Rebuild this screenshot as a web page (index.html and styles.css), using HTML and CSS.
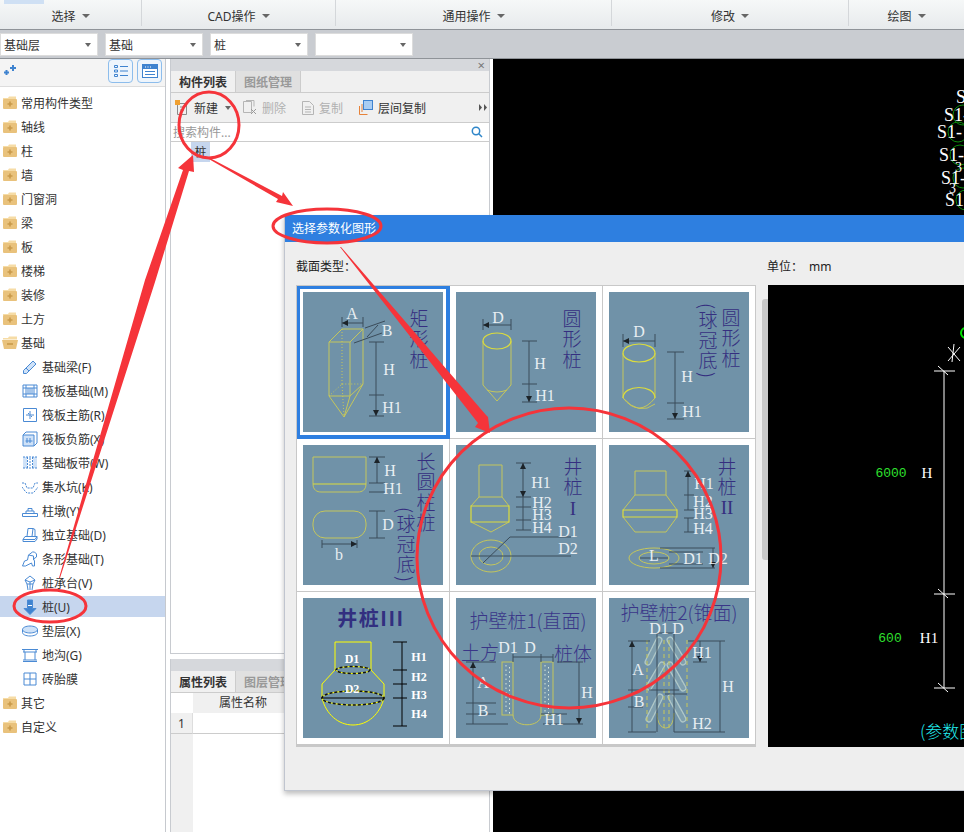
FILE: index.html
```html
<!DOCTYPE html>
<html lang="zh-CN">
<head>
    <meta charset="UTF-8">
    <meta name="viewport" content="width=device-width, initial-scale=1.0">
    <title>选择参数化图形</title>
    <link rel="stylesheet" href="styles.css">
</head>
<body>
<svg class="defs" width="0" height="0">
    <defs>
        <marker id="ah" viewBox="0 0 6 6" refX="6" refY="3" markerWidth="6" markerHeight="6" markerUnits="userSpaceOnUse" orient="auto-start-reverse">
            <path d="M0 0L6 3L0 6Z" fill="#1c2328"/>
        </marker>
        <symbol id="folder-plus" viewBox="0 0 16 14">
            <path d="M1 2h5l1-1.500h7v3H1z" fill="#f6dca6"/>
            <rect x="1" y="3" width="14" height="10" rx="1" fill="#e9c27c"/>
            <path d="M8 5.500v5M5.500 8h5" stroke="#c99a4a" stroke-width="1.600"/>
        </symbol>
        <symbol id="folder-minus" viewBox="0 0 16 14">
            <path d="M1 2h5l1-1.500h8v3H1z" fill="#f6dca6"/>
            <path d="M0 4h16l-2 9H2z" fill="#e9c27c"/>
            <path d="M5 8h6" stroke="#c99a4a" stroke-width="1.600"/>
        </symbol>
    </defs>
</svg>

<div class="app">
    <div class="ribbon">
        <span class="ribbon-chip"></span>
        <div class="ribbon-col col-select">选择<i class="caret"></i></div>
        <div class="ribbon-col col-cad">CAD操作<i class="caret"></i></div>
        <div class="ribbon-col col-common">通用操作<i class="caret"></i></div>
        <div class="ribbon-col col-edit">修改<i class="caret"></i></div>
        <div class="ribbon-col col-draw">绘图<i class="caret"></i></div>
    </div>

    <div class="selects">
        <div class="select">基础层<i class="caret small"></i></div>
        <div class="select">基础<i class="caret small"></i></div>
        <div class="select">桩<i class="caret small"></i></div>
        <div class="select"><i class="caret small"></i></div>
    </div>

    <div class="workspace">
        <div class="nav">
            <div class="nav-tools">
                <svg class="nav-add" width="14" height="12" viewBox="0 0 14 12"><path d="M10 0v6M7 3h6M3.500 5v5M1 7.500h5" stroke="#3f83cf" stroke-width="2"/></svg>
                <span class="nav-btn">
                    <svg width="14" height="14" viewBox="0 0 14 14" fill="none" stroke="#3f83cf"><path d="M.5 1.500h3v2h-3zM.5 6h3v2h-3zM.5 10.500h3v2h-3zM6 2.500h8M6 7h8M6 11.500h8"/></svg>
                </span>
                <span class="nav-btn">
                    <svg width="16" height="14" viewBox="0 0 16 14"><rect x=".5" y=".5" width="15" height="13" fill="#fff" stroke="#3f83cf"/><rect x="1" y="1" width="14" height="4" fill="#3f83cf"/><path d="M3 7.500h10M3 10.500h10" stroke="#3f83cf"/><path d="M3 3h1M5.500 3h1M8 3h1" stroke="#fff"/></svg>
                </span>
            </div>
            <ul class="tree">
                <li class="tree-row"><svg class="folder" width="16" height="14"><use href="#folder-plus"/></svg>常用构件类型</li>
                <li class="tree-row"><svg class="folder" width="16" height="14"><use href="#folder-plus"/></svg>轴线</li>
                <li class="tree-row"><svg class="folder" width="16" height="14"><use href="#folder-plus"/></svg>柱</li>
                <li class="tree-row"><svg class="folder" width="16" height="14"><use href="#folder-plus"/></svg>墙</li>
                <li class="tree-row"><svg class="folder" width="16" height="14"><use href="#folder-plus"/></svg>门窗洞</li>
                <li class="tree-row"><svg class="folder" width="16" height="14"><use href="#folder-plus"/></svg>梁</li>
                <li class="tree-row"><svg class="folder" width="16" height="14"><use href="#folder-plus"/></svg>板</li>
                <li class="tree-row"><svg class="folder" width="16" height="14"><use href="#folder-plus"/></svg>楼梯</li>
                <li class="tree-row"><svg class="folder" width="16" height="14"><use href="#folder-plus"/></svg>装修</li>
                <li class="tree-row"><svg class="folder" width="16" height="14"><use href="#folder-plus"/></svg>土方</li>
                <li class="tree-row"><svg class="folder" width="16" height="14"><use href="#folder-minus"/></svg>基础</li>
                <li class="tree-row leaf">
                    <svg class="leaf-icon" viewBox="0 0 16 16"><path class="fill" d="M1.500 11.500L11 2l3 3-9.500 9.500h-3z"/><path d="M1.500 11.500L11 2l3 3-9.500 9.500h-3zM4 9l3 3"/></svg>基础梁(F)
                </li>
                <li class="tree-row leaf">
                    <svg class="leaf-icon" viewBox="0 0 16 16"><path d="M1 2h14v12H1zM4 2v12M12 2v12M1 5h14M1 11h14M6 5v6M8 5v6M10 5v6" /></svg>筏板基础(M)
                </li>
                <li class="tree-row leaf">
                    <svg class="leaf-icon" viewBox="0 0 16 16"><path d="M1.500 1.500h13v13h-13zM8 4v8M4 8h8M6 6.500h1M9 9.500h1"/></svg>筏板主筋(R)
                </li>
                <li class="tree-row leaf">
                    <svg class="leaf-icon" viewBox="0 0 16 16"><path class="fill" d="M1 4h11v11H1z"/><path d="M1 4h11v11H1zM1 4l3-3h11v11l-3 3M5 7v5M8 7v5M3.500 10h7"/></svg>筏板负筋(X)
                </li>
                <li class="tree-row leaf">
                    <svg class="leaf-icon" viewBox="0 0 16 16"><path class="fill" d="M1 2h4v11H1zM11 2h4v11h-4z"/><path d="M1 2h14M1 13h14M5.500 2v11M10.500 2v11M8 3v9" stroke-dasharray="2 1"/></svg>基础板带(W)
                </li>
                <li class="tree-row leaf">
                    <svg class="leaf-icon" viewBox="0 0 16 16"><path d="M0 4h3l2 5h6l2-5h3M0 8l3 4 2 2h6l2-2 3-4" stroke-dasharray="2 1"/></svg>集水坑(K)
                </li>
                <li class="tree-row leaf">
                    <svg class="leaf-icon" viewBox="0 0 16 16"><path d="M.5 13.500h15v-3H.5zM4 10.500V8h8v2.500M6 8V5.500h4V8"/></svg>柱墩(Y)
                </li>
                <li class="tree-row leaf">
                    <svg class="leaf-icon" viewBox="0 0 16 16"><path d="M1 14.500h12l2-2.500V9.500H3l-2 3zM1 12.500h12l2-3M5 9.500l1-8h5l-1 8M11 1.500l2 1v7"/></svg>独立基础(D)
                </li>
                <li class="tree-row leaf">
                    <svg class="leaf-icon" viewBox="0 0 16 16"><path d="M.5 15l2-5 3-1 1-5 4-3h2l2 2v3l-3 2 1 2v5h-2l-1-3-6 3zM6.500 4l5 1M11.500 5v4"/></svg>条形基础(T)
                </li>
                <li class="tree-row leaf">
                    <svg class="leaf-icon" viewBox="0 0 16 16"><path d="M8 1l5 4-2 4H5L3 5zM3 5l5 2 5-2M8 7v2M5 9l1 6M11 9l-1 6M8 9v6"/></svg>桩承台(V)
                </li>
                <li class="tree-row leaf active">
                    <svg class="leaf-icon solid" viewBox="0 0 16 16"><path d="M5.500 1h5v8.500H14l-6 6-6-6h3.500z"/><path class="cut" d="M6 6.500h4"/></svg>桩(U)
                </li>
                <li class="tree-row leaf">
                    <svg class="leaf-icon wide" viewBox="0 0 16 12"><ellipse class="fill" cx="8" cy="4.500" rx="7.500" ry="3.500"/><path d="M.5 4.500v3c0 2 3.500 3.500 7.500 3.500s7.500-1.500 7.500-3.500v-3M.5 4.500c0-2 3.500-3.500 7.500-3.500s7.500 1.500 7.500 3.500-3.500 3.500-7.500 3.500-7.500-1.500-7.500-3.500z"/></svg>垫层(X)
                </li>
                <li class="tree-row leaf">
                    <svg class="leaf-icon" viewBox="0 0 16 16"><path d="M0 2.500h16M1 5h14M2 2.500v2.500M14 2.500v2.500M3 5v8M13 5v8M1 14.500h14M1 13h14"/></svg>地沟(G)
                </li>
                <li class="tree-row leaf">
                    <svg class="leaf-icon" viewBox="0 0 16 16"><path d="M2 2h12v12H2zM8 2v12M2 8h12"/></svg>砖胎膜
                </li>
                <li class="tree-row"><svg class="folder" width="16" height="14"><use href="#folder-plus"/></svg>其它</li>
                <li class="tree-row"><svg class="folder" width="16" height="14"><use href="#folder-plus"/></svg>自定义</li>
            </ul>
        </div>

        <div class="side">
            <div class="pane pane-list">
                <div class="pane-strip"><span class="pane-close">×</span></div>
                <div class="tabs">
                    <span class="tab on">构件列表</span>
                    <span class="tab">图纸管理</span>
                </div>
                <div class="list-tools">
                    <span class="tool tool-new">
                        <svg width="14" height="15" viewBox="0 0 14 15" fill="none"><path d="M2.500 3.500h9v11h-9zM5 7h4M5 10h4" stroke="#8a8a8a"/><rect x="0" y="0" width="5" height="5" fill="#f0a030"/></svg>
                        新建<i class="caret small"></i>
                    </span>
                    <span class="tool off">
                        <svg width="14" height="15" viewBox="0 0 14 15" fill="none" stroke="#b5b5b5"><path d="M.5 1.500h8v11h-8zM3 .5h8v6"/><path d="M8 9l5 5M13 9l-5 5" stroke="#9a9a9a"/></svg>
                        删除
                    </span>
                    <span class="tool off">
                        <svg width="12" height="15" viewBox="0 0 12 15" fill="none" stroke="#b5b5b5"><path d="M.5 1.500h7l4 4v9H.5zM3 7h6M3 9.500h6M3 12h6"/></svg>
                        复制
                    </span>
                    <span class="tool">
                        <svg width="14" height="15" viewBox="0 0 14 15" fill="none"><path d="M.5 6v8.500h8M3 4v8" stroke="#e6823a"/><rect x="4.500" y=".5" width="9" height="9" fill="#a9cdf3" stroke="#3f83cf"/></svg>
                        层间复制
                    </span>
                    <svg class="tools-more" width="8" height="7" viewBox="0 0 8 7"><path d="M0 0l3 3.500L0 7zM5 0l3 3.500L5 7z" fill="#555"/></svg>
                </div>
                <div class="search">
                    <span>搜索构件...</span>
                    <svg width="12" height="12" viewBox="0 0 12 12" fill="none" stroke="#2f86c9" stroke-width="1.500"><circle cx="5" cy="5" r="3.700"/><path d="M7.800 7.800L11 11"/></svg>
                </div>
                <div class="list-body"><span class="list-item">桩</span></div>
            </div>
            <div class="pane pane-props">
                <div class="pane-strip"></div>
                <div class="tabs">
                    <span class="tab on">属性列表</span>
                    <span class="tab">图层管理</span>
                </div>
                <div class="props">
                    <div class="props-nums"><span class="props-corner"></span><span class="props-num">1</span></div>
                    <div class="props-col"><div class="props-head">属性名称</div><div class="props-cell"></div></div>
                </div>
            </div>
        </div>

        <div class="canvas">
            <svg class="cad" width="471" height="156" viewBox="0 0 471 156">
                <g class="cad-rings">
                    <circle cx="470" cy="56" r="10"/>
                    <circle cx="465" cy="73" r="10"/>
                    <circle cx="467" cy="96" r="10"/>
                    <circle cx="470" cy="119" r="10"/>
                    <circle cx="473" cy="141" r="10"/>
                </g>
                <g class="cad-labels">
                    <text x="463" y="44">S1</text>
                    <text x="451" y="62">S1-</text>
                    <text x="444" y="79">S1-</text>
                    <text x="446" y="102">S1-</text>
                    <text x="448" y="125">S1-</text>
                    <text x="452" y="147">S1-</text>
                    <text x="462" y="113" class="cad-small">3</text>
                    <text x="456" y="134" class="cad-small">3</text>
                </g>
            </svg>
        </div>
    </div>

    <!-- 选择参数化图形 window -->
    <div class="dialog">
        <div class="dialog-title">选择参数化图形</div>
        <div class="dialog-info">
            <span class="info-type">截面类型：</span>
            <span class="info-unit">单位：</span>
            <span class="info-mm">mm</span>
        </div>
        <div class="dialog-main">
            <div class="shapes">
                <div class="shape selected">
                    <svg class="thumb" viewBox="0 0 140 140">
                        <g class="yl">
                            <path d="M26 50h21v54H26zM26 50l13-13h21L47 50M60 37v55L47 104M26 104l15 21 19-33M47 104l-6 21"/>
                            <path class="dot" d="M39 37v55M26 104l13-12h21M39 92l2 33"/>
                        </g>
                        <g class="dm">
                            <path d="M39 25v10M60 25v10M62 36l20-7M51 51l28-10M66 50h15M66 103h15M66 124h15"/>
                        </g>
                        <g class="dm" marker-start="url(#ah)" marker-end="url(#ah)">
                            <path d="M39 31H60M64 45L75 33M73 50V103M73 103V124"/>
                        </g>
                        <g class="lb">
                            <text x="49" y="21">A</text><text x="84" y="38">B</text><text x="86" y="77">H</text><text x="89" y="115">H1</text>
                        </g>
                        <text class="vt" x="116" y="17">矩形桩</text>
                    </svg>
                </div>
                <div class="shape">
                    <svg class="thumb" viewBox="0 0 140 140">
                        <g class="yl">
                            <path d="M27 49v44l14 16 14-16V49"/>
                            <path d="M31 98q10 4 20 0"/>
                            <ellipse class="br" cx="41" cy="49" rx="14" ry="8"/>
                        </g>
                        <g class="dm"><path d="M27 27v11M55 27v11M66 49h15M66 92h15M66 110h15"/></g>
                        <g class="dm" marker-start="url(#ah)" marker-end="url(#ah)"><path d="M27 33H55M73 49V92M73 92V110"/></g>
                        <g class="lb"><text x="42" y="25">D</text><text x="84" y="71">H</text><text x="89" y="103">H1</text></g>
                        <text class="vt" x="116" y="17">圆形桩</text>
                    </svg>
                </div>
                <div class="shape">
                    <svg class="thumb" viewBox="0 0 140 140">
                        <g class="yl">
                            <path d="M14 61v45M46 61v45M14 106q16 20 32 0M14 106q16 18 32 6"/>
                            <ellipse class="br" cx="30" cy="61" rx="16" ry="9"/>
                            <path class="br" d="M14 106c0-14 32-14 32 0"/>
                        </g>
                        <g class="dm"><path d="M14 42v13M46 42v13M58 60h17M58 111h17M58 127h17"/></g>
                        <g class="dm" marker-start="url(#ah)" marker-end="url(#ah)"><path d="M14 49H46M66 60V111M66 111V127"/></g>
                        <g class="lb"><text x="30" y="39">D</text><text x="78" y="84">H</text><text x="83" y="119">H1</text></g>
                        <text class="vt" x="122" y="16">圆形桩</text>
                        <text class="vt" x="99" y="11">(球冠底)</text>
                    </svg>
                </div>

                <div class="shape">
                    <svg class="thumb" viewBox="0 0 140 140">
                        <g class="yl">
                            <path d="M10 39V12h53v27c0 6-4 8-8 8H18c-4 0-8-2-8-8z"/>
                            <path class="br" d="M10 39h53"/>
                            <rect x="10" y="66" width="53" height="27" rx="12"/>
                        </g>
                        <g class="dm"><path d="M66 12h16M66 38h16M66 47h16M66 66h16M66 93h16M19 95v8M54 95v8"/></g>
                        <g class="dm" marker-start="url(#ah)" marker-end="url(#ah)"><path d="M74 12V38M74 66V93M19 99H54"/></g>
                        <g class="lb"><text x="87" y="25">H</text><text x="90" y="43">H1</text><text x="85" y="79">D</text><text x="36" y="109">b</text></g>
                        <text class="vt" x="123" y="7">长圆柱桩</text>
                        <text class="vt" x="103" y="62">(球冠底)</text>
                    </svg>
                </div>
                <div class="shape">
                    <svg class="thumb" viewBox="0 0 140 140">
                        <g class="yl">
                            <path d="M23 20h23v32H23zM23 52l-8 9M46 52l7 9M15 77l20 10 18-10"/>
                            <path class="br" d="M15 61h38v16H15z"/>
                            <ellipse cx="35" cy="111" rx="20" ry="16"/>
                            <ellipse cx="35" cy="111" rx="12" ry="9"/>
                        </g>
                        <g class="dm"><path d="M60 18h15M60 52h15M60 62h15M60 75h15M60 85h15M27 118l27-26h61M15 111h100M67 52v33"/></g>
                        <g class="dm" marker-start="url(#ah)" marker-end="url(#ah)"><path d="M67 18V52"/></g>
                        <g class="lb"><text x="85" y="37">H1</text><text x="86" y="57">H2</text><text x="86" y="69">H3</text><text x="86" y="82">H4</text><text x="112" y="86">D1</text><text x="112" y="103">D2</text></g>
                        <text class="vt" x="117" y="12">井桩</text>
                        <text class="zh-serif" x="117" y="63">I</text>
                    </svg>
                </div>
                <div class="shape">
                    <svg class="thumb" viewBox="0 0 140 140">
                        <g class="yl">
                            <path d="M26 26h31v24H26zM26 50L14 65M57 50l11 15M14 72l12 15h31l11-15"/>
                            <path class="br" d="M14 65h54v7H14z"/>
                            <ellipse cx="45" cy="113" rx="25" ry="10"/>
                            <ellipse cx="45" cy="113" rx="15" ry="6"/>
                        </g>
                        <g class="dm"><path d="M75 26h10M75 50h10M75 65h10M75 73h10M75 87h10M51 103h55M51 123h55M60 107h34M60 119h34"/></g>
                        <g class="dm" marker-start="url(#ah)" marker-end="url(#ah)"><path d="M79 26V50M79 50V65M79 73V87M31 113H59M104 103V123"/></g>
                        <g class="lb"><text x="95" y="38">H1</text><text x="94" y="56">H2</text><text x="94" y="68">H3</text><text x="94" y="83">H4</text><text x="45" y="110">L</text><text x="84" y="113">D1</text><text x="109" y="113">D2</text></g>
                        <text class="vt" x="118" y="12">井桩</text>
                        <text class="zh-serif" x="118" y="62">II</text>
                    </svg>
                </div>

                <div class="shape">
                    <svg class="thumb" viewBox="0 0 140 140">
                        <text class="zh-title bold" x="68" y="19">井桩III</text>
                        <path class="yb" d="M32 72V44h36v28M32 72L19 86v14c4 16 16 27 31 27s27-11 31-27V86L68 72"/>
                        <g class="yb">
                            <ellipse cx="50" cy="72" rx="17" ry="3.500"/>
                            <ellipse cx="50" cy="100" rx="31" ry="7"/>
                        </g>
                        <g class="dash">
                            <ellipse cx="50" cy="72" rx="17" ry="3.500"/>
                            <ellipse cx="50" cy="100" rx="31" ry="7"/>
                        </g>
                        <path class="bk" d="M18 100h64M99 44v84M90 44h14M90 72h14M90 86h14M90 100h14M90 128h14"/>
                        <g class="lb bold">
                            <text x="49" y="61">D1</text><text x="49" y="91">D2</text><text x="116" y="59">H1</text><text x="116" y="79">H2</text><text x="116" y="97">H3</text><text x="116" y="116">H4</text>
                        </g>
                    </svg>
                </div>
                <div class="shape">
                    <svg class="thumb" viewBox="0 0 140 140">
                        <text class="zh-title" x="72" y="21">护壁桩1(直面)</text>
                        <text class="zh-title" x="24" y="53">土方</text>
                        <text class="zh-title" x="117" y="54">桩体</text>
                        <g class="yl">
                            <rect x="46" y="64" width="11" height="53"/>
                            <rect x="85" y="64" width="12" height="53"/>
                            <path d="M57 117c0 13 28 13 28 0"/>
                        </g>
                        <g class="dots"><path d="M50 67v48M53.500 69v48M89 67v48M92.500 69v48"/></g>
                        <g class="dm"><path d="M10 64h30M10 105h30M10 116h30M10 126h42M101 64h26M87 126h40M85 116h26M57 56v8M85 56v8M97 56v8"/></g>
                        <g class="dm" marker-start="url(#ah)" marker-end="url(#ah)"><path d="M17 64V105M57 59H85M123 64V126"/></g>
                        <path class="dm" d="M17 105V126M85 59H97"/>
                        <g class="lb"><text x="52" y="49">D1</text><text x="74" y="49">D</text><text x="27" y="84">A</text><text x="27" y="112">B</text><text x="131" y="94">H</text><text x="98" y="121">H1</text></g>
                    </svg>
                </div>
                <div class="shape">
                    <svg class="thumb" viewBox="0 0 140 140">
                        <text class="zh-title" x="70" y="13">护壁桩2(锥面)</text>
                        <g class="caps"><path d="M50 42L39 64M61 42L74 64M53 67L40 89M61 67L74 90M51 99L40 121M62 99L74 121"/></g>
                        <g class="caps-in"><path d="M50 42L39 64M61 42L74 64M53 67L40 89M61 67L74 90M51 99L40 121M62 99L74 121"/></g>
                        <g class="dash-y"><path d="M38 42v90M78 42v90M55 42v90M60 42v90"/></g>
                        <path class="yl" d="M48 115c0 20 17 20 17 0"/>
                        <g class="dm"><path d="M48 35v99M65 35v99M48 35h17M19 43h22M79 43h37M19 134h28M65 134h51M19 92h15M19 109h15M84 64h14M40 92h30M56 96h22"/></g>
                        <g class="dm" marker-start="url(#ah)" marker-end="url(#ah)"><path d="M23 43V92M23 92V109M111 43V134M91 43V64"/></g>
                        <path class="dm" d="M23 109V134"/>
                        <g class="lb"><text x="50" y="30">D1</text><text x="69" y="30">D</text><text x="29" y="71">A</text><text x="30" y="103">B</text><text x="119" y="88">H</text><text x="93" y="54">H1</text><text x="93" y="125">H2</text></g>
                    </svg>
                </div>
            </div>
            <div class="scroll"><span class="scroll-thumb"></span></div>
            <div class="preview">
                <svg class="preview-draw" width="197" height="462" viewBox="0 0 197 462">
                    <path class="pv-line" d="M176 86V403M166 86h21M166 309h21M166 403h21M170 81l10 9M170 304l10 9M170 398l10 9M180 62l12 14M192 62l-12 14M186 59l-2 18"/>
                    <circle class="pv-green" cx="198" cy="48" r="5"/>
                    <text class="pv-g" x="123" y="188">6000</text>
                    <text class="pv-w" x="159" y="188">H</text>
                    <text class="pv-g" x="122" y="353">600</text>
                    <text class="pv-w" x="161" y="353">H1</text>
                    <text class="pv-c" x="152" y="445">(参数图形)</text>
                </svg>
            </div>
        </div>
    </div>

    <!-- 标注 -->
    <svg class="marks" width="964" height="832" viewBox="0 0 964 832">
        <g class="ring">
            <ellipse cx="209" cy="125" rx="30" ry="33"/>
            <ellipse cx="327" cy="226" rx="54" ry="17"/>
            <ellipse cx="50" cy="606" rx="36" ry="16"/>
            <ellipse cx="569" cy="558" rx="152" ry="150"/>
        </g>
        <g class="arrow">
            <path d="M59 578L60 578L155 282L189 171L194 172L193 155L178 168L183 170L145 280Z"/>
            <path d="M207 158L208 157L282 196L283 192L293 206L276 202L278 199Z"/>
            <path d="M340 247L341 247L486 415L488 417L490 433L475 427L478 423Z"/>
        </g>
    </svg>
</div>
</body>
</html>
```

FILE: styles.css
```css
* {
    box-sizing: border-box;
}
body {
    margin: 0;
    font-family: "Noto Sans", "Noto Sans CJK SC", sans-serif;
    font-size: 12px;
    color: #333;
    background-color: #fff;
}
ul {
    margin: 0;
    padding: 0;
    list-style: none;
}
.defs {
    position: absolute;
}
.app {
    position: relative;
    width: 964px;
    height: 832px;
    overflow: hidden;
    display: flex;
    flex-direction: column;
}

/* ribbon */
.ribbon {
    position: relative;
    display: flex;
    height: 30px;
    flex: none;
    background: linear-gradient(#f6f8f8, #e7eaec);
    border-bottom: 1px solid #8f9398;
}
.ribbon-chip {
    position: absolute;
    left: 4px;
    top: 0;
    width: 40px;
    height: 4px;
    background-color: #cfe0f4;
}
.ribbon-col {
    display: flex;
    align-items: center;
    justify-content: center;
    gap: 6px;
    border-right: 1px solid #d4d7da;
    margin-bottom: 3px;
    padding-top: 5px;
}
.col-select { width: 142px; }
.col-cad { width: 194px; }
.col-common { width: 276px; }
.col-edit { width: 237px; }
.col-draw { width: 115px; border-right: 0; }
.caret {
    display: inline-block;
    width: 0;
    height: 0;
    border-left: 4px solid transparent;
    border-right: 4px solid transparent;
    border-top: 4px solid #666;
}
.caret.small {
    border-left-width: 3px;
    border-right-width: 3px;
}

/* selects */
.selects {
    display: flex;
    gap: 7px;
    height: 29px;
    flex: none;
    padding-top: 3px;
    background-color: #c9ccd1;
    border-bottom: 1px solid #8f9398;
}
.select {
    display: flex;
    align-items: center;
    justify-content: space-between;
    width: 98px;
    height: 23px;
    padding: 0 6px 0 3px;
    background-color: #fff;
    border: 1px solid #dcdcdc;
}
.select .caret:only-child {
    margin-left: auto;
}

/* main area */
.workspace {
    display: flex;
    flex: 1;
    min-height: 0;
}
.nav {
    width: 166px;
    flex: none;
    border-right: 1px solid #c6c9ce;
}
.nav-tools {
    display: flex;
    align-items: center;
    gap: 4px;
    height: 28px;
    padding: 0 3px 3px 3px;
    background-color: #f4f4f4;
    border-bottom: 1px solid #ddd;
}
.nav-add {
    margin-right: auto;
}
.nav-btn {
    display: flex;
    align-items: center;
    justify-content: center;
    width: 25px;
    height: 24px;
    background-color: #eef5fc;
    border: 1px solid #8dbdec;
    border-radius: 4px;
}
.tree {
    display: grid;
    gap: 3px;
    padding-top: 5px;
}
.tree-row {
    display: flex;
    align-items: center;
    height: 21px;
    padding-left: 2px;
    white-space: nowrap;
}
.folder {
    width: 16px;
    height: 14px;
    margin-right: 3px;
    flex: none;
}
.leaf {
    padding-left: 22px;
}
.leaf.active {
    background-color: #c6d6ee;
}
.leaf-icon {
    width: 16px;
    height: 16px;
    margin-right: 4px;
    flex: none;
    fill: none;
    stroke: #4a8ad4;
    stroke-width: 1;
}
.leaf-icon.wide {
    height: 12px;
}
.leaf-icon .fill {
    fill: #cfe2f8;
    stroke: none;
}
.leaf-icon.solid {
    fill: #3f83cf;
}
.leaf-icon .cut {
    stroke: #fff;
}

/* middle panes */
.side {
    display: flex;
    flex-direction: column;
    gap: 5px;
    width: 320px;
    margin-left: 4px;
    flex: none;
}
.pane {
    display: flex;
    flex-direction: column;
    border: solid #c8cbd0;
    border-width: 0 1px 1px;
}
.pane-list {
    height: 595px;
}
.pane-props {
    flex: 1;
    border-bottom: 0;
}
.pane-strip {
    position: relative;
    height: 12px;
    flex: none;
    background-color: #d6d8dc;
}
.pane-close {
    position: absolute;
    right: 4px;
    top: -3px;
    font-size: 13px;
    color: #777;
}
.tabs {
    display: flex;
    height: 22px;
    flex: none;
    border-bottom: 1px solid #ccc;
    background-color: #f0f0f0;
}
.tab {
    display: flex;
    align-items: center;
    justify-content: center;
    width: 65px;
    font-weight: 700;
    color: #999;
    background-color: #e0e0e0;
    border-right: 1px solid #ccc;
}
.tab.on {
    color: #333;
    background-color: #f0f0f0;
}
.list-tools {
    display: flex;
    align-items: center;
    height: 30px;
    flex: none;
    padding-left: 4px;
    background-color: #f0f0f0;
    border-bottom: 1px solid #ccc;
}
.tool {
    display: flex;
    align-items: center;
    gap: 5px;
    margin-right: 16px;
}
.tool-new {
    margin-right: 12px;
}
.tool .caret {
    margin-left: 2px;
}
.tool.off {
    color: #b0b0b0;
}
.tools-more {
    margin-left: auto;
    margin-right: 2px;
}
.search {
    display: flex;
    align-items: center;
    justify-content: space-between;
    height: 19px;
    flex: none;
    padding: 0 6px 0 2px;
    color: #999;
    border-bottom: 1px solid #ccc;
}
.list-body {
    flex: 1;
    padding-left: 20px;
}
.list-item {
    display: inline-flex;
    align-items: center;
    justify-content: center;
    width: 19px;
    height: 20px;
    background-color: #c6d6ee;
}
.props {
    display: flex;
    flex: 1;
}
.props-nums {
    display: flex;
    flex-direction: column;
    width: 22px;
    flex: none;
    background-color: #f0f0f0;
}
.props-corner {
    height: 20px;
    background-color: #fff;
}
.props-num {
    display: flex;
    align-items: center;
    justify-content: center;
    height: 21px;
    border-bottom: 1px solid #ccc;
    border-right: 1px solid #ddd;
}
.props-col {
    flex: 1;
}
.props-head {
    height: 20px;
    width: 100px;
    text-align: center;
    line-height: 20px;
    background-color: #f0f0f0;
}
.props-cell {
    height: 21px;
    border-bottom: 1px solid #ccc;
}
.canvas {
    flex: 1;
    margin-left: 3px;
    background-color: #000;
}
.cad {
    display: block;
}
.cad-rings {
    fill: none;
    stroke: #0b8a0b;
}
.cad-labels {
    font-family: "Liberation Serif", serif;
    font-size: 18px;
    fill: #fff;
}
.cad-small {
    font-size: 14px;
}

/* dialog */
.dialog {
    position: absolute;
    left: 284px;
    top: 215px;
    width: 700px;
    height: 576px;
    display: flex;
    flex-direction: column;
    background-color: #eee;
    border: solid #c0c5cf;
    border-width: 0 1px 1px;
    box-shadow: 0 3px 5px rgba(0, 0, 0, 0.25);
}
.dialog-title {
    height: 27px;
    flex: none;
    margin-right: -1px;
    padding-left: 7px;
    line-height: 27px;
    color: #fff;
    background-color: #2e7fe0;
}
.dialog-info {
    display: flex;
    align-items: center;
    height: 43px;
    flex: none;
    padding: 5px 0 0 11px;
    color: #222;
}
.info-type {
    width: 471px;
}
.info-unit {
    width: 42px;
}
.dialog-main {
    display: flex;
    height: 462px;
    margin-left: 11px;
}
.shapes {
    display: grid;
    grid-template-columns: repeat(3, 153px);
    grid-auto-rows: 153px;
    width: 460px;
    background-color: #fff;
    border: solid #c8c8c8;
    border-width: 1px 0 2px 1px;
    flex: none;
}
.shape {
    padding: 6px;
    border: solid #c8c8c8;
    border-width: 0 1px 1px 0;
}
.shape.selected {
    box-shadow: inset 0 0 0 3px #2e7fe0;
    border-color: #2e7fe0;
}
.thumb {
    display: block;
    width: 140px;
    height: 140px;
    background-color: #7092a8;
}
.thumb .yl,
.thumb path.yl {
    fill: none;
    stroke: #c4c65c;
    stroke-width: 1;
}
.thumb .br {
    stroke: #dcdc3c;
    stroke-width: 1.200;
}
.thumb .dot {
    stroke-dasharray: 1 2;
}
.thumb .dm {
    fill: none;
    stroke: #3b4c5a;
    stroke-width: 1;
}
.thumb .lb {
    font-family: "Liberation Serif", serif;
    font-size: 16px;
    fill: #e8eef2;
    text-anchor: middle;
    dominant-baseline: central;
}
.thumb .lb.bold {
    font-weight: 700;
    font-size: 12px;
    fill: #fff;
}
.thumb .vt {
    font-family: "Noto Sans CJK SC", sans-serif;
    font-size: 19px;
    font-weight: 300;
    fill: #352f80;
    writing-mode: vertical-rl;
    letter-spacing: 1.500px;
}
.thumb .zh-serif {
    font-family: "Liberation Serif", serif;
    font-size: 19px;
    fill: #352f80;
    text-anchor: middle;
    dominant-baseline: central;
}
.thumb .zh-title {
    font-family: "Noto Sans CJK SC", sans-serif;
    font-size: 19px;
    font-weight: 300;
    fill: #3a3688;
    text-anchor: middle;
    dominant-baseline: central;
}
.thumb .zh-title.bold {
    font-family: "Noto Sans CJK SC", sans-serif;
    font-size: 20px;
    font-weight: 700;
    letter-spacing: 1.500px;
    fill: #322f80;
}
.thumb .yb {
    fill: none;
    stroke: #ffff00;
}
.thumb .dash {
    fill: none;
    stroke: #111;
    stroke-width: 1.500;
    stroke-dasharray: 3 2;
}
.thumb .bk {
    fill: none;
    stroke: #000;
}
.thumb .dots {
    fill: none;
    stroke: #d8e8dc;
    stroke-dasharray: 1.500 3;
}
.thumb .caps {
    fill: none;
    stroke: #b0c8c8;
    stroke-width: 7;
    stroke-linecap: round;
}
.thumb .caps-in {
    fill: none;
    stroke: #7f9fae;
    stroke-width: 4.500;
    stroke-linecap: round;
    stroke-dasharray: 2 1.500;
}
.thumb .dash-y {
    fill: none;
    stroke: #c8c85a;
    stroke-dasharray: 4 3;
}
.scroll {
    width: 12px;
    flex: none;
    padding: 14px 0 0 6px;
}
.scroll-thumb {
    display: block;
    width: 6px;
    height: 261px;
    background-color: #c8c8c8;
    border-radius: 3px 0 0 3px;
}
.preview {
    flex: 1;
    background-color: #000;
}
.preview-draw {
    display: block;
}
.pv-line {
    fill: none;
    stroke: #fff;
}
.pv-green {
    fill: none;
    stroke: #00e000;
    stroke-width: 2;
}
.pv-g,
.pv-w,
.pv-c {
    font-family: "Liberation Mono", monospace;
    font-size: 13px;
    dominant-baseline: central;
    text-anchor: middle;
}
.pv-g {
    fill: #2fe02f;
}
.pv-w {
    font-family: "Liberation Serif", serif;
    font-size: 15px;
    fill: #fff;
}
.pv-c {
    font-family: "Noto Sans CJK SC", sans-serif;
    font-size: 17px;
    font-weight: 300;
    fill: #22eef0;
    text-anchor: start;
}

/* red marks */
.marks {
    position: absolute;
    left: 0;
    top: 0;
    pointer-events: none;
}
.ring {
    fill: none;
    stroke: #f5343a;
    stroke-width: 3;
}
.arrow {
    fill: #f5343a;
}
```
